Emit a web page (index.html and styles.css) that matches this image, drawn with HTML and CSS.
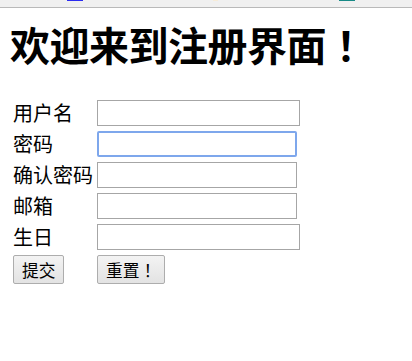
FILE: index.html
```html
<!DOCTYPE html>
<html>
<head>
    <meta charset="utf-8">
    <link rel="stylesheet" href="styles.css">
</head>
<body>
    <div class="topbar">
        <span class="mark mark-blue"></span>
        <span class="mark mark-beige"></span>
        <span class="mark mark-teal"></span>
    </div>
    <div class="page">
        <h1 class="title">欢迎来到注册界面<span class="bang">！</span></h1>
        <form>
            <table class="form-table">
                <tr>
                    <td class="label">用户名</td>
                    <td><input class="field field-wide" type="text"></td>
                </tr>
                <tr>
                    <td class="label">密码</td>
                    <td><input class="field field-focus" type="password"></td>
                </tr>
                <tr>
                    <td class="label">确认密码</td>
                    <td><input class="field" type="password"></td>
                </tr>
                <tr>
                    <td class="label">邮箱</td>
                    <td><input class="field" type="text"></td>
                </tr>
                <tr>
                    <td class="label">生日</td>
                    <td><input class="field field-wide" type="text"></td>
                </tr>
                <tr>
                    <td><button class="btn" type="button">提交</button></td>
                    <td><button class="btn" type="button">重置<span class="bang">！</span></button></td>
                </tr>
            </table>
        </form>
    </div>
</body>
</html>
```

FILE: styles.css
```css
body {
    margin: 0;
    padding: 0;
    background: white;
    color: #000;
    font-family: 'Noto Sans CJK SC', 'Liberation Sans', sans-serif;
}
.topbar {
    position: relative;
    height: 7px;
    background: #f0f0f0;
    border-bottom: 1px solid #b9b9b9;
}
.mark {
    position: absolute;
    top: 0;
    height: 1px;
    width: 16px;
}
.mark-blue {
    left: 67px;
    background: #2b2bf0;
}
.mark-beige {
    left: 213px;
    width: 5px;
    background: #f7ecd8;
}
.mark-teal {
    left: 339px;
    background: #178a86;
}
.page {
    padding: 10px;
}
.title {
    font-size: 40px;
    font-weight: bold;
    line-height: 52px;
    margin: 0 0 27px 0;
    letter-spacing: -0.5px;
}
.bang {
    font-family: 'Noto Sans CJK JP', 'Noto Sans CJK SC', sans-serif;
}
.form-table {
    border-spacing: 2px 3px;
    margin-top: -1px;
    margin-left: 0;
}
.form-table td {
    padding: 1px;
    vertical-align: middle;
}
.label {
    font-size: 20px;
    line-height: 26px;
    width: 80px;
    white-space: nowrap;
}
.field {
    display: block;
    box-sizing: border-box;
    width: 200px;
    height: 26px;
    margin: 0;
    border: 1px solid #a6a6a6;
    background: white;
    padding: 0 3px;
    font-size: 16px;
}
.field-wide {
    width: 203px;
}
.field-focus {
    border: 2px solid #7ea7ec;
    border-radius: 2px;
    outline: none;
}
.btn {
    display: block;
    box-sizing: border-box;
    height: 29px;
    margin: 0;
    padding: 0 8px;
    font-family: 'Noto Sans CJK SC', 'Liberation Sans', sans-serif;
    font-size: 16.7px;
    color: #000;
    background: linear-gradient(#f3f3f3, #e3e3e3);
    border: 1px solid #adadad;
    border-radius: 2px;
}
```
